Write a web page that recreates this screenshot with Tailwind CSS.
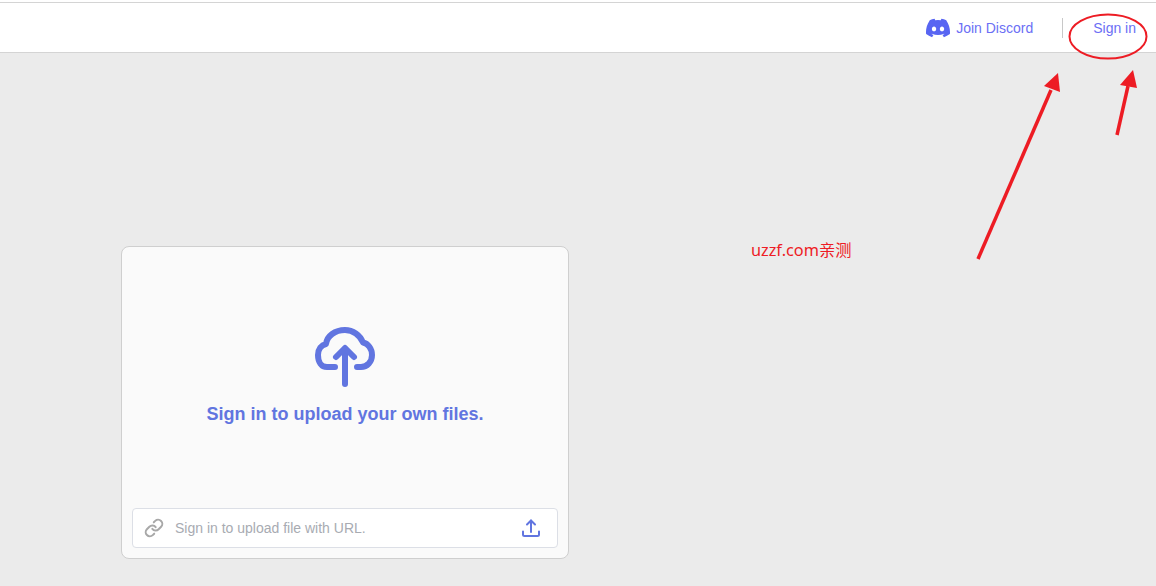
<!DOCTYPE html>
<html lang="en">
<head>
<meta charset="utf-8">
<title>Sign in to upload</title>
<script src="https://cdn.jsdelivr.net/npm/@tailwindcss/browser@4"></script>
</head>
<body class="relative h-[586px] w-[1156px] overflow-hidden bg-[#ebebeb] font-['Liberation_Sans',Arial,sans-serif]">
  <div class="h-[2px] bg-white"></div>
  <header class="flex h-[51px] items-center justify-end border-y border-[#d4d4d4] bg-white pr-5">
    <a class="flex items-center gap-[6px] text-sm text-[#6b6ff5]">
      <svg class="h-[24px] w-[24px] text-[#5865f2]" viewBox="0 0 16 16" fill="currentColor"><path d="M13.545 2.907a13.2 13.2 0 0 0-3.257-1.011.05.05 0 0 0-.052.025c-.141.25-.297.577-.406.833a12.2 12.2 0 0 0-3.658 0 8 8 0 0 0-.412-.833.05.05 0 0 0-.052-.025c-1.125.194-2.22.534-3.257 1.011a.04.04 0 0 0-.021.018C.356 6.024-.213 9.047.066 12.032q.003.022.021.037a13.3 13.3 0 0 0 3.995 2.02.05.05 0 0 0 .056-.019q.463-.63.818-1.329a.05.05 0 0 0-.01-.059l-.018-.011a9 9 0 0 1-1.248-.595.05.05 0 0 1-.02-.066l.015-.019q.127-.095.248-.195a.05.05 0 0 1 .051-.007c2.619 1.196 5.454 1.196 8.041 0a.05.05 0 0 1 .053.007q.121.1.248.195a.05.05 0 0 1-.004.085 8 8 0 0 1-1.249.594.05.05 0 0 0-.03.03.05.05 0 0 0 .003.041c.24.465.515.909.817 1.329a.05.05 0 0 0 .056.019 13.2 13.2 0 0 0 4.001-2.02.05.05 0 0 0 .021-.037c.334-3.451-.559-6.449-2.366-9.106a.03.03 0 0 0-.02-.019m-8.198 7.307c-.789 0-1.438-.724-1.438-1.612s.637-1.613 1.438-1.613c.807 0 1.45.73 1.438 1.613 0 .888-.637 1.612-1.438 1.612m5.316 0c-.788 0-1.438-.724-1.438-1.612s.637-1.613 1.438-1.613c.807 0 1.451.73 1.438 1.613 0 .888-.631 1.612-1.438 1.612"/></svg>
      <span>Join Discord</span>
    </a>
    <div class="ml-[29px] mr-[30px] h-[20px] w-px bg-[#c8c8c8]"></div>
    <a class="text-sm text-[#6b6ff5]">Sign in</a>
  </header>

  <main class="pl-[121px] pt-[193px]">
    <section class="flex h-[313px] w-[448px] flex-col rounded-lg border border-[#cfcfcf] bg-[#fafafa] px-[10px] pb-[10px]">
      <div class="flex flex-1 flex-col items-center pt-[79px]">
        <svg class="h-[62px] w-[62px]" viewBox="0 0 62 62" fill="none" stroke="#6175e0" stroke-width="6" stroke-linecap="round" stroke-linejoin="round">
          <path d="M21 41h-8c-5.500 0-9-5-9-12 0-6 3.500-10 8-11C13 10 21 4 31 4c8 0 15 5 18 12.500 5 1 9 6 9 12.500 0 7-5 12-11 12h-4"/>
          <path d="M31 58V23"/>
          <path d="M22 31 31 22 40 31"/>
        </svg>
        <h2 class="mt-[14px] text-lg leading-[24px] font-bold text-[#6175e0]">Sign in to upload your own files.</h2>
      </div>
      <div class="flex h-[40px] items-center rounded border border-[#dcdfe6] bg-white pl-[11px] pr-[17px]">
        <svg class="h-[20px] w-[20px] text-[#a8a8a8]" viewBox="0 0 24 24" fill="none" stroke="currentColor" stroke-width="2.400" stroke-linecap="round" stroke-linejoin="round">
          <path d="M10 13a5 5 0 0 0 7.540.540l3-3a5 5 0 0 0-7.070-7.070l-1.720 1.710"/>
          <path d="M14 11a5 5 0 0 0-7.540-.540l-3 3a5 5 0 0 0 7.070 7.070l1.710-1.710"/>
        </svg>
        <span class="ml-[11px] flex-1 text-sm text-[#a8abb2]">Sign in to upload file with URL.</span>
        <svg class="h-[18px] w-[18px] text-[#6175e0]" viewBox="0 0 18 18" fill="none" stroke="currentColor" stroke-width="2" stroke-linecap="round" stroke-linejoin="round">
          <path d="M1 12.500v3A1.500 1.500 0 0 0 2.500 17h13a1.500 1.500 0 0 0 1.500-1.500v-3"/>
          <path d="M9 13V1.500"/>
          <path d="M5 5.500 9 1.500l4 4"/>
        </svg>
      </div>
    </section>
  </main>

  <span class="absolute left-[751px] top-[239px] font-['Noto_Sans','Noto_Sans_CJK_SC',sans-serif] text-[16.300px] leading-[22px] text-[#ee1c25]">uzzf.com亲测</span>

  <svg class="pointer-events-none absolute inset-0 h-[586px] w-[1156px]" viewBox="0 0 1156 586" fill="none">
    <ellipse cx="1108" cy="36.500" rx="38.500" ry="22" stroke="#ed1c24" stroke-width="2"/>
    <path d="M978 259 1051 90" stroke="#ed1c24" stroke-width="3.500"/>
    <path d="M1058 73 1044 86 1060 92Z" fill="#ed1c24"/>
    <path d="M1117 135 1128 86" stroke="#ed1c24" stroke-width="3.500"/>
    <path d="M1133 70 1120 85 1137 88Z" fill="#ed1c24"/>
  </svg>
</body>
</html>
